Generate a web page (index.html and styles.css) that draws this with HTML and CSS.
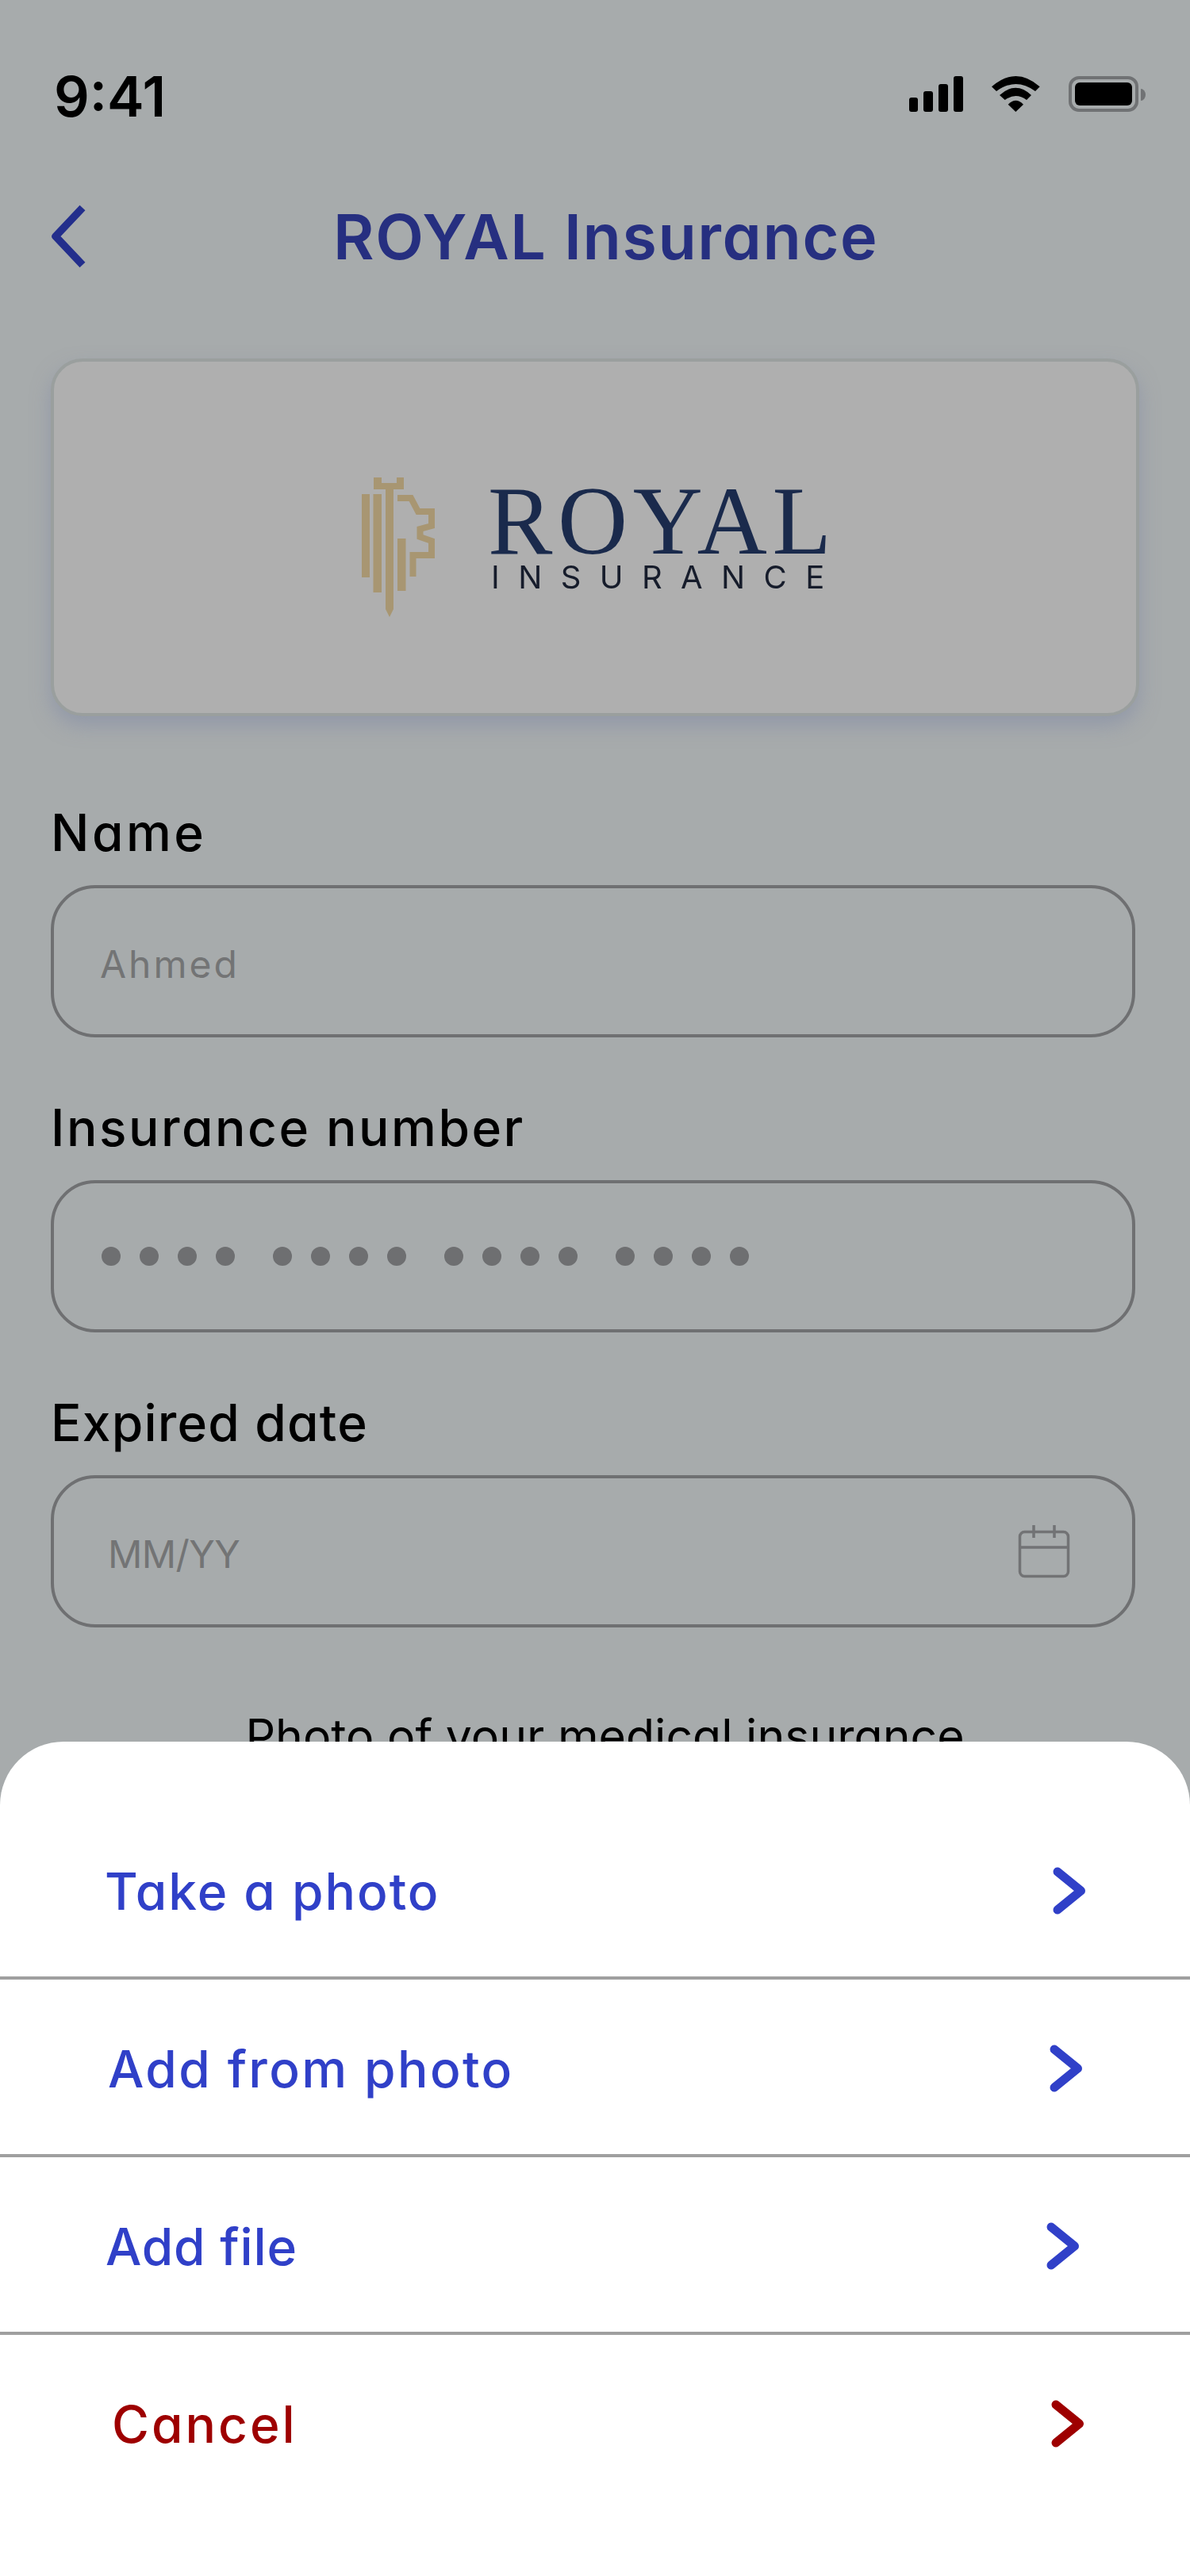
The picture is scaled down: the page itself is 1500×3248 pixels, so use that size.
FILE: index.html
```html
<!DOCTYPE html>
<html lang="en">
  <head>
    <meta charset="UTF-8" />
    <title>ROYAL Insurance</title>
    <link rel="stylesheet" href="styles.css">
  </head>
  <body>
    <div class="screen">
      <div class="status-bar">
        <span class="time">9:41</span>
        <svg class="status-icons" width="298" height="45" viewBox="0 0 298 45">
          <rect x="0" y="27" width="11" height="18" rx="3" />
          <rect x="18" y="19" width="12" height="26" rx="3" />
          <rect x="37" y="10" width="12" height="35" rx="3" />
          <rect x="56" y="0" width="12" height="45" rx="3" />
          <g transform="translate(104 0)">
            <path d="M0 13.3Q30.5 -13.3 60.7 13.3L55 19Q30.5 1 6 19Z" />
            <path d="M10 24Q30.5 5.4 50 24L44 30Q30.5 20 16.7 30Z" />
            <path d="M20.7 35.7Q30.5 25.7 40 35.7L30.3 45Z" />
          </g>
          <rect x="203" y="2" width="84" height="41" rx="11" fill="none" stroke="#707274" stroke-width="4" />
          <rect x="209" y="8" width="72" height="29" rx="6" />
          <path d="M292 16a6 7.5 0 0 1 0 15Z" fill="#707274" />
        </svg>
      </div>

      <div class="nav">
        <svg class="back" width="48" height="88" viewBox="0 0 48 88">
          <path d="M40 8L6 44L40 80" fill="none" stroke="#232e8c" stroke-width="9.5" stroke-linejoin="round" />
        </svg>
        <h1>ROYAL Insurance</h1>
      </div>

      <div class="card">
        <div class="logo">
          <svg class="logo-mark" width="93" height="176" viewBox="456 602 93 176">
            <rect x="456" y="623" width="10" height="105" />
            <rect x="470.5" y="623" width="10.5" height="124" />
            <path d="M486 615H496V768L491 778L486 768Z" />
            <path d="M471 602H481V609H500V602H509V617H471Z" />
            <rect x="501" y="679" width="10.5" height="66" />
            <path d="M501 628H518L527 645H544V663L529.5 667V677L544 682V700H520.5V727" fill="none" stroke="#a89672" stroke-width="8" />
          </svg>
          <div class="logo-text">
            <div class="logo-royal">ROYAL</div>
            <div class="logo-insurance">INSURANCE</div>
          </div>
        </div>
      </div>

      <form class="form">
        <div class="field">
          <label class="label-name">Name</label>
          <div class="box box-name"><span class="box-text">Ahmed</span></div>
        </div>
        <div class="field">
          <label>Insurance number</label>
          <div class="box">
            <div class="dots">
              <div class="dot-group"><i></i><i></i><i></i><i></i></div>
              <div class="dot-group"><i></i><i></i><i></i><i></i></div>
              <div class="dot-group"><i></i><i></i><i></i><i></i></div>
              <div class="dot-group"><i></i><i></i><i></i><i></i></div>
            </div>
          </div>
        </div>
        <div class="field">
          <label class="label-date">Expired date</label>
          <div class="box box-date">
            <span class="box-text">MM/YY</span>
            <svg width="70" height="70" viewBox="0 0 70 70" fill="none" stroke="#727375" stroke-width="3.5">
              <rect x="4.5" y="10.5" width="61" height="56" rx="6" />
              <path d="M4.5 30H65.5M22 2V18M48 2V18" />
            </svg>
          </div>
        </div>
        <p class="note">Photo of your medical insurance</p>
      </form>

      <div class="sheet">
        <div class="row row-take">
          <span>Take a photo</span>
          <svg class="chevron" width="52" height="72" viewBox="0 0 52 72"><path d="M11 12L40.5 36L11 60" /></svg>
        </div>
        <div class="row row-add-photo">
          <span>Add from photo</span>
          <svg class="chevron" width="52" height="72" viewBox="0 0 52 72"><path d="M11 12L40.5 36L11 60" /></svg>
        </div>
        <div class="row row-add-file">
          <span>Add file</span>
          <svg class="chevron" width="52" height="72" viewBox="0 0 52 72"><path d="M11 12L40.5 36L11 60" /></svg>
        </div>
        <div class="row row-cancel">
          <span>Cancel</span>
          <svg class="chevron" width="52" height="72" viewBox="0 0 52 72"><path d="M11 12L40.5 36L11 60" /></svg>
        </div>
      </div>
    </div>
  </body>
</html>
```

FILE: styles.css
```css
* {
  box-sizing: border-box;
}
body {
  margin: 0;
  font-family: Inter, "Liberation Sans", sans-serif;
  font-feature-settings: "cv11";
  color: #000;
}
.screen {
  position: relative;
  width: 1500px;
  height: 3248px;
  overflow: hidden;
  background-color: #a7abac;
}

/* status bar */
.status-bar {
  display: flex;
  justify-content: space-between;
  height: 200px;
  padding: 80px 56px 0 68px;
}
.time {
  font-size: 70px;
  font-weight: 600;
  line-height: 84px;
  font-feature-settings: normal;
}
.status-icons {
  margin-top: 16px;
}

/* header */
.nav {
  display: flex;
  align-items: center;
  height: 196px;
  margin-bottom: 56px;
  padding-left: 64px;
}
.back {
  flex: none;
}
h1 {
  margin: 0 0 0 308px;
  font-size: 79px;
  font-weight: 600;
  line-height: 100px;
  letter-spacing: 1.6px;
  color: #262f80;
  white-space: nowrap;
}

/* logo card */
.card {
  display: flex;
  align-items: flex-start;
  width: 1372px;
  height: 451px;
  margin-left: 64px;
  padding: 144px 0 0 388px;
  background-color: #afafaf;
  border: 4px solid #9a9f9e;
  border-radius: 40px;
  box-shadow: 0 12px 24px rgba(130, 138, 165, 0.55);
}
.logo {
  display: flex;
  gap: 66px;
  filter: blur(0.5px);
}
.logo-mark {
  fill: #a89672;
  margin-top: 2px;
}
.logo-text {
  padding-top: 8px;
}
.logo-royal {
  font-family: "Liberation Serif", serif;
  font-size: 122px;
  line-height: 98px;
  letter-spacing: 6.6px;
  color: #1a2a4c;
}
.logo-insurance {
  padding-left: 4px;
  font-size: 40px;
  line-height: 44px;
  letter-spacing: 23.4px;
  color: #161c2b;
  white-space: nowrap;
}

/* form */
.form {
  width: 1367px;
  margin: 117px 0 0 64px;
}
.field {
  height: 372px;
}
label {
  display: block;
  height: 96px;
  font-size: 64px;
  font-weight: 500;
  line-height: 60px;
  letter-spacing: 2.5px;
}
.label-name {
  letter-spacing: 3.5px;
}
.label-date {
  letter-spacing: 1.2px;
}
.box {
  display: flex;
  align-items: center;
  height: 192px;
  padding: 0 58px;
  border: 4px solid #6f7072;
  border-radius: 56px;
  font-size: 48px;
  color: #737475;
}
.box-text {
  padding-top: 6px;
}
.box-name {
  letter-spacing: 3px;
}
.box-date {
  justify-content: space-between;
  padding: 0 76px 0 68px;
  letter-spacing: -0.6px;
}
.dots {
  display: flex;
  gap: 48px;
  padding-left: 2px;
}
.dot-group {
  display: flex;
  gap: 24px;
}
.dot-group i {
  width: 24px;
  height: 24px;
  border-radius: 50%;
  background-color: #6e6f71;
}
.note {
  margin: 13px 0 0;
  padding-left: 30px;
  font-size: 59px;
  line-height: 80px;
  text-align: center;
  white-space: nowrap;
}

/* bottom sheet, lies over the form */
.sheet {
  position: absolute;
  left: 0;
  right: 0;
  bottom: 0;
  height: 1052px;
  padding-top: 76px;
  background-color: #fff;
  border-radius: 80px 80px 0 0;
}
.row {
  display: flex;
  align-items: center;
  justify-content: space-between;
  height: 224px;
  padding-top: 4px;
  border-bottom: 4px solid #9f9f9f;
  font-size: 64px;
  font-weight: 500;
  letter-spacing: 2px;
  color: #3040c8;
}
.chevron {
  fill: none;
  stroke: #3040c8;
  stroke-width: 11;
  stroke-linecap: round;
  stroke-linejoin: round;
}
.row-take {
  padding-left: 132px;
  padding-right: 126px;
}
.row-add-photo {
  padding-left: 136px;
  padding-right: 130px;
  letter-spacing: 2.4px;
}
.row-add-file {
  padding-left: 133px;
  padding-right: 134px;
  letter-spacing: 0.8px;
}
.row-cancel {
  padding-left: 141px;
  padding-right: 128px;
  border-bottom-color: transparent;
  letter-spacing: 3px;
  color: #9e0000;
}
.row-cancel .chevron {
  stroke: #9e0000;
}
```
